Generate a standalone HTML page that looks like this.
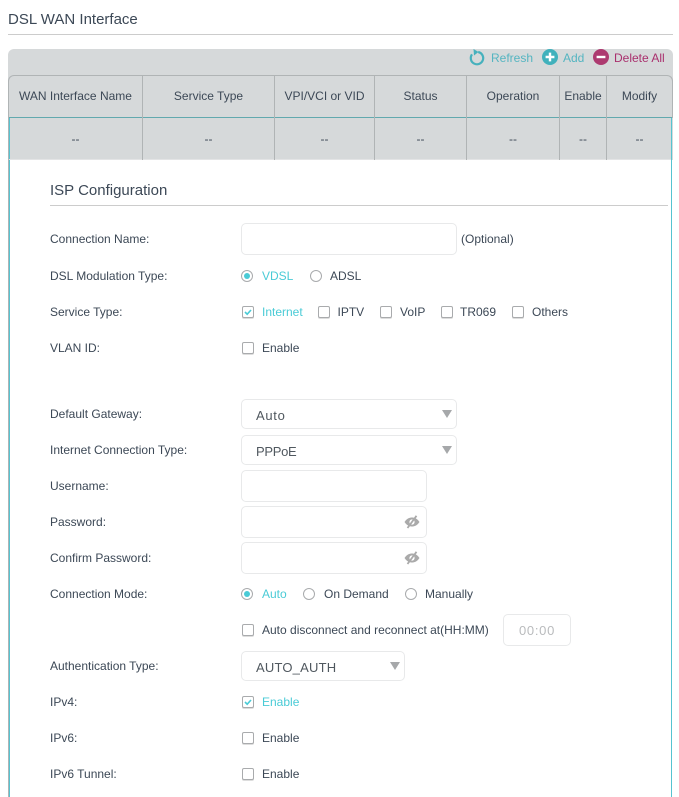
<!DOCTYPE html>
<html><head><meta charset="utf-8"><style>
*{box-sizing:border-box}
html,body{margin:0;padding:0;background:#fff;width:679px;height:797px;overflow:hidden}
body{position:relative;font-family:"Liberation Sans",Arial,sans-serif;font-size:12px;color:#3c4856}
.a{position:absolute;white-space:nowrap;line-height:14px}
.b{position:absolute}
.h{top:89px;text-align:center;line-height:14px;position:absolute;white-space:nowrap}
.d{top:132px;text-align:center;line-height:14px;position:absolute;color:#3c4856}
.v{position:absolute;width:1px;background:#b0b4b5}
.in{position:absolute;border:1px solid #e8e9ea;border-radius:5px;background:#fff}
.sel{font-size:13px;line-height:31px;padding-left:14px;color:#50585f}
.sel:after{content:"";position:absolute;right:4px;top:10px;border-left:5px solid transparent;border-right:5px solid transparent;border-top:8px solid #a6a8aa}
.cb{position:absolute;width:12px;height:12px;border:1px solid #a9abad;border-radius:2px;background:#fff;box-shadow:0 1px 0 #ddd}
.r{position:absolute;width:12px;height:12px;border:1px solid #a9abad;border-radius:50%;background:#fff}
.r.on:after{content:"";position:absolute;left:2px;top:2px;width:6px;height:6px;border-radius:50%;background:#4acbd6}
.c{color:#4acbd6}
.l{left:50px}
</style></head><body>
<div class="a" style="left:8px;top:12px;font-size:15px;line-height:16px;color:#3c4856">DSL WAN Interface</div>
<div class="b" style="left:8px;top:34px;width:665px;height:1px;background:#ccc"></div>

<div class="b" style="left:8px;top:49px;width:665px;height:111px;background:#d6d9da;border-radius:6px 6px 0 0"></div>
<div class="b" style="left:8px;top:75px;width:665px;height:43px;border:1px solid #b0b4b5;border-bottom:0;border-radius:6px 6px 0 0"></div>
<div class="b" style="left:9px;top:117px;width:663px;height:1px;background:#62a9ae"></div>
<div class="b" style="left:8px;top:118px;width:1px;height:679px;background:#b0b4b5"></div>
<div class="b" style="left:9px;top:118px;width:1px;height:679px;background:#56c3d0"></div>
<div class="b" style="left:671px;top:118px;width:1px;height:679px;background:#56c3d0"></div>
<div class="b" style="left:9px;top:159px;width:662px;height:1px;background:#e3e4e5"></div>
<div class="b" style="left:10px;top:160px;width:661px;height:637px;background:#fff"></div>

<div class="v" style="left:142px;top:76px;height:84px"></div>
<div class="v" style="left:274px;top:76px;height:84px"></div>
<div class="v" style="left:374px;top:76px;height:84px"></div>
<div class="v" style="left:466px;top:76px;height:84px"></div>
<div class="v" style="left:559px;top:76px;height:84px"></div>
<div class="v" style="left:606px;top:76px;height:84px"></div>

<div class="h" style="left:9px;width:133px">WAN Interface Name</div>
<div class="h" style="left:143px;width:131px">Service Type</div>
<div class="h" style="left:275px;width:99px">VPI/VCI or VID</div>
<div class="h" style="left:375px;width:91px">Status</div>
<div class="h" style="left:467px;width:92px">Operation</div>
<div class="h" style="left:560px;width:46px">Enable</div>
<div class="h" style="left:607px;width:65px">Modify</div>
<div class="d" style="left:9px;width:133px">--</div>
<div class="d" style="left:143px;width:131px">--</div>
<div class="d" style="left:275px;width:99px">--</div>
<div class="d" style="left:375px;width:91px">--</div>
<div class="d" style="left:467px;width:92px">--</div>
<div class="d" style="left:560px;width:46px">--</div>
<div class="d" style="left:607px;width:65px">--</div>

<svg class="b" style="left:468px;top:48px" width="20" height="20" viewBox="0 0 20 20"><path d="M10.200 4A6.200 6.200 0 1 1 4 6.400" fill="none" stroke="#46b1bd" stroke-width="2.200"/><path d="M5.500 1L10.500 4 6 7.500Z" fill="#46b1bd"/></svg>
<div class="a" style="left:491px;top:51px;color:#55b5c1">Refresh</div>
<svg class="b" style="left:542px;top:49px" width="16" height="16" viewBox="0 0 16 16"><circle cx="8" cy="8" r="8" fill="#41b1bc"/><path d="M8 3.600v8.800M3.600 8h8.800" stroke="#fff" stroke-width="2.400"/></svg>
<div class="a" style="left:563px;top:51px;color:#55b5c1">Add</div>
<svg class="b" style="left:593px;top:49px" width="16" height="16" viewBox="0 0 16 16"><circle cx="8" cy="8" r="8" fill="#ad3a70"/><path d="M3.600 8h8.800" stroke="#fff" stroke-width="2.400"/></svg>
<div class="a" style="left:614px;top:51px;color:#a92f6d">Delete All</div>

<div class="a" style="left:50px;top:183px;font-size:15px;line-height:16px">ISP Configuration</div>
<div class="b" style="left:50px;top:205px;width:618px;height:1px;background:#ccc"></div>

<div class="a l" style="top:232px">Connection Name:</div>
<div class="in" style="left:241px;top:223px;width:216px;height:32px"></div>
<div class="a" style="left:461px;top:232px">(Optional)</div>

<div class="a l" style="top:269px">DSL Modulation Type:</div>
<div class="r on" style="left:241px;top:270px"></div><div class="a c" style="left:262px;top:269px">VDSL</div>
<div class="r" style="left:310px;top:270px"></div><div class="a" style="left:330px;top:269px">ADSL</div>

<div class="a l" style="top:305px">Service Type:</div>
<div class="cb" style="left:242px;top:306px"></div><svg class="b" style="left:242px;top:306px" width="12" height="12" viewBox="0 0 12 12"><path d="M3 6l2.200 2.200L9 4" fill="none" stroke="#4acbd6" stroke-width="1.600"/></svg><div class="a c" style="left:262px;top:305px">Internet</div>
<div class="cb" style="left:318px;top:306px"></div><div class="a" style="left:337.500px;top:305px">IPTV</div>
<div class="cb" style="left:380px;top:306px"></div><div class="a" style="left:400px;top:305px">VoIP</div>
<div class="cb" style="left:441px;top:306px"></div><div class="a" style="left:460px;top:305px">TR069</div>
<div class="cb" style="left:512px;top:306px"></div><div class="a" style="left:532px;top:305px">Others</div>

<div class="a l" style="top:341px">VLAN ID:</div>
<div class="cb" style="left:242px;top:342px"></div><div class="a" style="left:262px;top:341px">Enable</div>

<div class="a l" style="top:407px">Default Gateway:</div>
<div class="in sel" style="left:241px;top:399px;width:216px;height:30px;letter-spacing:.7px">Auto</div>
<div class="a l" style="top:443px">Internet Connection Type:</div>
<div class="in sel" style="left:241px;top:435px;width:216px;height:30px;letter-spacing:-.3px">PPPoE</div>
<div class="a l" style="top:479px">Username:</div>
<div class="in" style="left:241px;top:470px;width:186px;height:32px"></div>
<div class="a l" style="top:515px">Password:</div>
<div class="in" style="left:241px;top:506px;width:186px;height:32px"></div>
<svg class="b" style="left:404px;top:515px" width="16" height="14" viewBox="0 0 16 14"><path d="M.5 7C3 3.400 5.400 2.500 8 2.500S13 3.400 15.500 7C13 10.600 10.600 11.500 8 11.500S3 10.600 .5 7Z" fill="#aaa"/><circle cx="8" cy="7" r="2.600" fill="#fff"/><path d="M12.500 .8L3.500 13" stroke="#aaa" stroke-width="1.800"/></svg>
<div class="a l" style="top:551px">Confirm Password:</div>
<div class="in" style="left:241px;top:542px;width:186px;height:32px"></div>
<svg class="b" style="left:404px;top:551px" width="16" height="14" viewBox="0 0 16 14"><path d="M.5 7C3 3.400 5.400 2.500 8 2.500S13 3.400 15.500 7C13 10.600 10.600 11.500 8 11.500S3 10.600 .5 7Z" fill="#aaa"/><circle cx="8" cy="7" r="2.600" fill="#fff"/><path d="M12.500 .8L3.500 13" stroke="#aaa" stroke-width="1.800"/></svg>

<div class="a l" style="top:587px">Connection Mode:</div>
<div class="r on" style="left:241px;top:588px"></div><div class="a c" style="left:262px;top:587px">Auto</div>
<div class="r" style="left:303px;top:588px"></div><div class="a" style="left:324px;top:587px">On Demand</div>
<div class="r" style="left:405px;top:588px"></div><div class="a" style="left:425px;top:587px">Manually</div>

<div class="cb" style="left:242px;top:624px"></div><div class="a" style="left:262px;top:623px">Auto disconnect and reconnect at(HH:MM)</div>
<div class="in" style="left:503px;top:614px;width:68px;height:32px;font-size:13px;letter-spacing:.7px;line-height:31px;text-align:center;color:#b9bbbd">00:00</div>

<div class="a l" style="top:659px">Authentication Type:</div>
<div class="in sel" style="left:241px;top:651px;width:164px;height:30px;letter-spacing:.2px">AUTO_AUTH</div>

<div class="a l" style="top:695px">IPv4:</div>
<div class="cb" style="left:242px;top:696px"></div><svg class="b" style="left:242px;top:696px" width="12" height="12" viewBox="0 0 12 12"><path d="M3 6l2.200 2.200L9 4" fill="none" stroke="#4acbd6" stroke-width="1.600"/></svg><div class="a c" style="left:262px;top:695px">Enable</div>
<div class="a l" style="top:731px">IPv6:</div>
<div class="cb" style="left:242px;top:732px"></div><div class="a" style="left:262px;top:731px">Enable</div>
<div class="a l" style="top:767px">IPv6 Tunnel:</div>
<div class="cb" style="left:242px;top:768px"></div><div class="a" style="left:262px;top:767px">Enable</div>
</body></html>
